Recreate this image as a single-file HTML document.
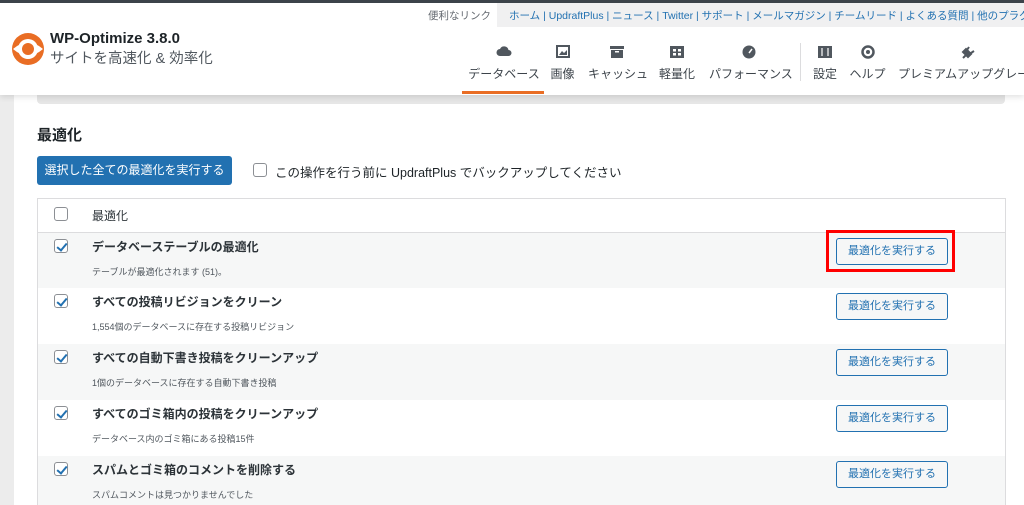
<!DOCTYPE html>
<html><head><meta charset="utf-8"><style>
*{margin:0;padding:0;box-sizing:border-box}
html,body{width:1024px;height:505px;overflow:hidden}
body{background:#fff;font-family:"Liberation Sans","Noto Sans CJK JP",sans-serif;position:relative;color:#1d2327}
.abs{position:absolute}
.top{left:0;top:0;width:1024px;height:3px;background:#3c434a;z-index:5}
.hdr{left:0;top:3px;width:1024px;height:92px;background:#fff;box-shadow:0 2px 6px rgba(0,0,0,.12);z-index:2}
.links{left:497px;top:3px;width:527px;height:24px;background:#f0f0f1;font-size:10.5px;color:#2271b1;padding:5px 0 0 12px;white-space:nowrap;z-index:3}
.tab{top:42px;font-size:12px;color:#3c434a;text-align:center;white-space:nowrap}
.tab .ic{display:block;height:20px}
.leftbar{left:0;top:95px;width:14px;height:410px;background:#ececec}
.band{left:37px;top:95px;width:968px;height:9px;background:#e6e6e6;border-radius:0 0 4px 4px}
.table{left:37px;top:198px;width:969px;height:320px;border:1px solid #dcdcde;border-bottom:none}
.row{position:absolute;left:0;width:967px;height:56px}
.cb{position:absolute;width:14px;height:14px;border:1px solid #8c8f94;border-radius:3px;background:#fff}
.cb.on::after{content:"";position:absolute;left:3.5px;top:0.5px;width:4px;height:8px;border:solid #2271b1;border-width:0 2px 2px 0;transform:rotate(40deg)}
.t{position:absolute;left:54px;font-size:12px;font-weight:bold;color:#2c3338}
.d{position:absolute;left:54px;font-size:9px;color:#50575e}
.btn{position:absolute;left:798px;width:112px;height:27px;border:1px solid #2271b1;border-radius:3px;background:#f6f7f7;color:#2271b1;font-size:11px;text-align:center;line-height:25px}
</style></head><body>
<div class="abs top"></div>
<div class="abs hdr">
  <svg class="abs" style="left:9px;top:27px" width="38" height="38" viewBox="0 0 38 38">
    <path d="M3 19 A16 16 0 0 1 35 19 L29 19 A10 10 0 0 0 9 19 Z" fill="#e96d24"/>
    <path d="M3 19 A16 16 0 0 0 35 19 L29 19 A10 10 0 0 1 9 19 Z" fill="#e96d24"/>
    <path d="M4 19 Q19 6 34 19 Q19 32 4 19 Z" fill="#fff"/>
    <circle cx="19" cy="19" r="6" fill="#e96d24"/>
  </svg>
  <div class="abs" style="left:50px;top:27px;font-size:15px;font-weight:bold;color:#1d2327">WP-Optimize 3.8.0</div>
  <div class="abs" style="left:50px;top:44px;font-size:14.5px;color:#50575e">サイトを高速化 &amp; 効率化</div>
  <div class="abs" style="left:428px;top:5px;font-size:10.5px;color:#646970">便利なリンク</div>
  <div class="abs" style="left:800px;top:40px;width:1px;height:38px;background:#dcdcde"></div>
  <div class="abs" style="left:462px;top:88px;width:82px;height:3px;background:#e96d24"></div>
  <div class="abs tab" style="left:468px;width:72px"><span class="ic"><svg width="16" height="12" viewBox="0 0 16 12"><path d="M4 11a3.5 3.5 0 0 1 0-7 4.5 4.5 0 0 1 8.5 1A3 3 0 0 1 12.5 11Z" fill="#50575e"/></svg></span>データベース</div>
  <div class="abs tab" style="left:550px;width:25px"><span class="ic"><svg width="16" height="14"><rect x="2" y="1" width="12" height="11" fill="none" stroke="#50575e" stroke-width="2"/><path d="M4 10l3-4 2 2 3-3v5z" fill="#50575e"/></svg></span>画像</div>
  <div class="abs tab" style="left:588px;width:58px"><span class="ic"><svg width="16" height="14"><rect x="1" y="1" width="14" height="3" fill="#50575e"/><rect x="2" y="5" width="12" height="8" fill="#50575e"/><rect x="6" y="6" width="4" height="1.5" fill="#fff"/></svg></span>キャッシュ</div>
  <div class="abs tab" style="left:659px;width:36px"><span class="ic"><svg width="16" height="14"><rect x="1" y="1" width="14" height="12" fill="#50575e"/><rect x="4" y="4" width="3" height="2.5" fill="#fff"/><rect x="9" y="4" width="3" height="2.5" fill="#fff"/><rect x="4" y="8" width="3" height="2.5" fill="#fff"/><rect x="9" y="8" width="3" height="2.5" fill="#fff"/></svg></span>軽量化</div>
  <div class="abs tab" style="left:709px;width:80px"><span class="ic"><svg width="16" height="14"><circle cx="8" cy="7" r="6.5" fill="#50575e"/><path d="M8 8l3-4" stroke="#fff" stroke-width="1.5"/></svg></span>パフォーマンス</div>
  <div class="abs tab" style="left:813px;width:24px"><span class="ic"><svg width="16" height="14"><rect x="1" y="1" width="14" height="12" fill="#50575e"/><path d="M5 3v8M11 3v8" stroke="#fff" stroke-width="1.2"/></svg></span>設定</div>
  <div class="abs tab" style="left:849px;width:37px"><span class="ic"><svg width="16" height="14"><circle cx="8" cy="7" r="5.5" fill="none" stroke="#50575e" stroke-width="2.5"/><circle cx="8" cy="7" r="2" fill="#50575e"/></svg></span>ヘルプ</div>
  <div class="abs tab" style="left:898px"><span class="ic" style="text-align:left;padding-left:62px"><svg width="16" height="14"><path d="M3 13l4-4M6 4l5 5-3 3-5-5zM9 2l-2 3M14 6l-3 2" stroke="#50575e" stroke-width="2" fill="#50575e"/></svg></span>プレミアムアップグレー</div>
</div>
<div class="abs links">ホーム | UpdraftPlus | ニュース | Twitter | サポート | メールマガジン | チームリード | よくある質問 | 他のプラグイン</div>
<div class="abs leftbar"></div>
<div class="abs band"></div>
<div class="abs" style="left:37px;top:124px;font-size:15px;font-weight:bold">最適化</div>
<div class="abs" style="left:37px;top:156px;width:195px;height:29px;background:#2271b1;border-radius:3px;color:#fff;font-size:12px;line-height:29px;text-align:center">選択した全ての最適化を実行する</div>
<div class="cb abs" style="left:253px;top:163px"></div>
<div class="abs" style="left:275px;top:162px;font-size:12.5px;color:#1d2327">この操作を行う前に UpdraftPlus でバックアップしてください</div>
<div class="abs table">
  <div class="row" style="top:0;height:33px;background:#fff"><div class="cb" style="left:16px;top:8px"></div><div class="t" style="top:8px;font-weight:normal">最適化</div></div>
  <div class="row" style="top:33px;background:#f6f7f7;border-top:1px solid #dcdcde"><div class="cb on" style="left:16px;top:6px"></div><div class="t" style="top:5px">データベーステーブルの最適化</div><div class="d" style="top:32px">テーブルが最適化されます (51)。</div><div class="btn" style="top:5px">最適化を実行する</div></div>
  <div class="row" style="top:89px;background:#fff"><div class="cb on" style="left:16px;top:6px"></div><div class="t" style="top:5px">すべての投稿リビジョンをクリーン</div><div class="d" style="top:32px">1,554個のデータベースに存在する投稿リビジョン</div><div class="btn" style="top:5px">最適化を実行する</div></div>
  <div class="row" style="top:145px;background:#f6f7f7"><div class="cb on" style="left:16px;top:6px"></div><div class="t" style="top:5px">すべての自動下書き投稿をクリーンアップ</div><div class="d" style="top:32px">1個のデータベースに存在する自動下書き投稿</div><div class="btn" style="top:5px">最適化を実行する</div></div>
  <div class="row" style="top:201px;background:#fff"><div class="cb on" style="left:16px;top:6px"></div><div class="t" style="top:5px">すべてのゴミ箱内の投稿をクリーンアップ</div><div class="d" style="top:32px">データベース内のゴミ箱にある投稿15件</div><div class="btn" style="top:5px">最適化を実行する</div></div>
  <div class="row" style="top:257px;background:#f6f7f7"><div class="cb on" style="left:16px;top:6px"></div><div class="t" style="top:5px">スパムとゴミ箱のコメントを削除する</div><div class="d" style="top:32px">スパムコメントは見つかりませんでした</div><div class="btn" style="top:5px">最適化を実行する</div></div>
</div>
<div class="abs" style="left:826px;top:230px;width:129px;height:42px;border:3px solid #f00"></div>
</body></html>
